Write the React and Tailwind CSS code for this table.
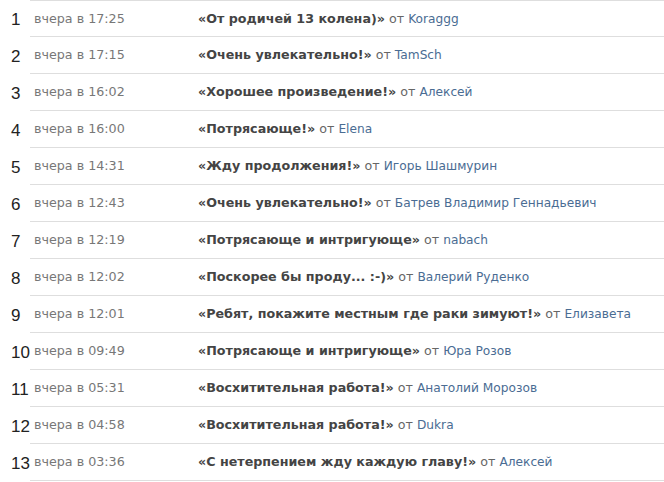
const rows = [
  ['17:25', 'От родичей 13 колена)', 'Koraggg'],
  ['17:15', 'Очень увлекательно!', 'TamSch'],
  ['16:02', 'Хорошее произведение!', 'Алексей'],
  ['16:00', 'Потрясающе!', 'Elena'],
  ['14:31', 'Жду продолжения!', 'Игорь Шашмурин'],
  ['12:43', 'Очень увлекательно!', 'Батрев Владимир Геннадьевич'],
  ['12:19', 'Потрясающе и интригующе', 'nabach'],
  ['12:02', 'Поскорее бы проду... :-)', 'Валерий Руденко'],
  ['12:01', 'Ребят, покажите местным где раки зимуют!', 'Елизавета'],
  ['09:49', 'Потрясающе и интригующе', 'Юра Розов'],
  ['05:31', 'Восхитительная работа!', 'Анатолий Морозов'],
  ['04:58', 'Восхитительная работа!', 'Dukra'],
  ['03:36', 'С нетерпением жду каждую главу!', 'Алексей'],
]

export default function App() {
  return (
    <div className="w-[664px] h-[482px] bg-white overflow-hidden">
      {rows.map(([time, title, author], i) => (
        <div key={i} className="flex items-center h-[37px]">
          <div className="w-[30px] pl-[11px] pt-[2px] text-[17px] text-[#222] leading-none font-['Liberation_Sans',Arial,sans-serif]">{i + 1}</div>
          <div className={`flex-1 flex items-center h-[37px] border-b border-[#dedede] ${i === 0 ? 'border-t' : ''} text-[12.7px] font-['DejaVu_Sans',Verdana,sans-serif]`}>
            <div className="w-[168px] pl-[4px] text-[#777]">вчера в {time}</div>
            <div className="whitespace-nowrap">
              <span className="font-bold text-[#444]">«{title}»</span>
              <span className="text-[#666]"> от </span>
              <span className="text-[12.2px] text-[#4a6c93]">{author}</span>
            </div>
          </div>
        </div>
      ))}
    </div>
  )
}
